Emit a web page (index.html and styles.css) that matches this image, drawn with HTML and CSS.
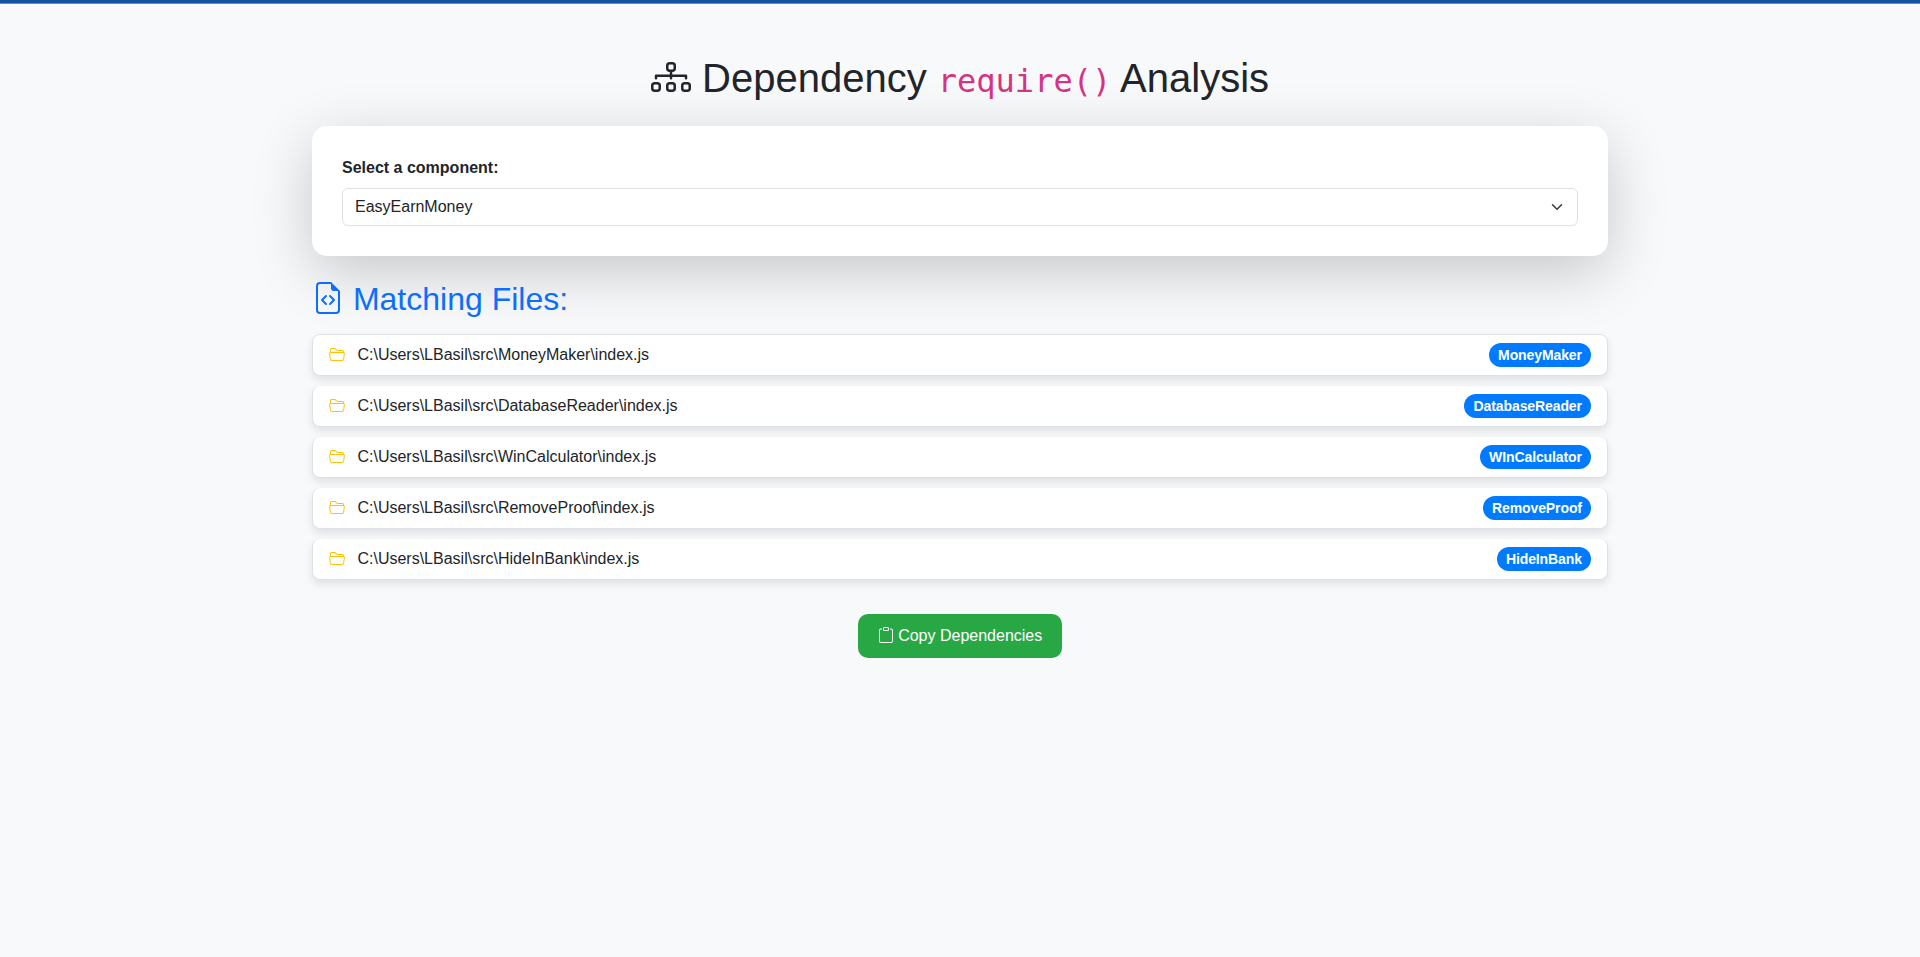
FILE: index.html
```html
<!DOCTYPE html>
<html lang="en">
<head>
<meta charset="utf-8">
<title>Dependency Analysis</title>
<link rel="stylesheet" href="styles.css">
</head>
<body>
<svg class="sprite" aria-hidden="true">
  <symbol id="folder" viewBox="0 0 16 16"><path d="M1 3.5A1.5 1.5 0 0 1 2.5 2h2.764c.958 0 1.76.56 2.311 1.184C7.985 3.648 8.48 4 9 4h4.5A1.5 1.5 0 0 1 15 5.5v.64c.57.265.94.876.856 1.546l-.64 5.124A2.5 2.5 0 0 1 12.733 15H3.266a2.5 2.5 0 0 1-2.481-2.19l-.64-5.124A1.5 1.5 0 0 1 1 6.14zM2 6h12v-.5a.5.5 0 0 0-.5-.5H9c-.964 0-1.71-.629-2.174-1.154C6.374 3.334 5.82 3 5.264 3H2.5a.5.5 0 0 0-.5.5zm-.367 1a.5.5 0 0 0-.496.562l.64 5.124A1.5 1.5 0 0 0 3.266 14h9.468a1.5 1.5 0 0 0 1.489-1.314l.64-5.124A.5.5 0 0 0 14.367 7z"/></symbol>
</svg>
<div class="topbar"></div>
<main class="container">
  <h1 class="title"><svg class="icon" viewBox="0 0 16 16"><path d="M6 3.5A1.5 1.5 0 0 1 7.5 2h1A1.5 1.5 0 0 1 10 3.5v1A1.5 1.5 0 0 1 8.5 6v1H14a.5.5 0 0 1 .5.5v1a.5.5 0 0 1-1 0V8h-5v.5a.5.5 0 0 1-1 0V8h-5v.5a.5.5 0 0 1-1 0v-1A.5.5 0 0 1 2 7h5.5V6A1.5 1.5 0 0 1 6 4.5zM8.5 5a.5.5 0 0 0 .5-.5v-1a.5.5 0 0 0-.5-.5h-1a.5.5 0 0 0-.5.5v1a.5.5 0 0 0 .5.5zM0 11.5A1.5 1.5 0 0 1 1.5 10h1A1.5 1.5 0 0 1 4 11.5v1A1.5 1.5 0 0 1 2.5 14h-1A1.5 1.5 0 0 1 0 12.5zm1.5-.5a.5.5 0 0 0-.5.5v1a.5.5 0 0 0 .5.5h1a.5.5 0 0 0 .5-.5v-1a.5.5 0 0 0-.5-.5zm4.5.5A1.5 1.5 0 0 1 7.5 10h1a1.5 1.5 0 0 1 1.5 1.5v1A1.5 1.5 0 0 1 8.5 14h-1A1.5 1.5 0 0 1 6 12.5zm1.5-.5a.5.5 0 0 0-.5.5v1a.5.5 0 0 0 .5.5h1a.5.5 0 0 0 .5-.5v-1a.5.5 0 0 0-.5-.5zm4.5.5a1.5 1.5 0 0 1 1.5-1.5h1a1.5 1.5 0 0 1 1.5 1.5v1a1.5 1.5 0 0 1-1.5 1.5h-1a1.5 1.5 0 0 1-1.5-1.5zm1.5-.5a.5.5 0 0 0-.5.5v1a.5.5 0 0 0 .5.5h1a.5.5 0 0 0 .5-.5v-1a.5.5 0 0 0-.5-.5z"/></svg> Dependency <code>require()</code> Analysis</h1>

  <section class="card">
    <label class="label" for="component">Select a component:</label>
    <div class="select-wrap">
      <select class="select" id="component"><option>EasyEarnMoney</option></select>
      <svg class="chevron" viewBox="0 0 16 16"><path fill="none" stroke="#343a40" stroke-linecap="round" stroke-linejoin="round" stroke-width="2" d="m2 5 6 6 6-6"/></svg>
    </div>
  </section>

  <h2 class="subtitle"><svg class="icon" viewBox="0 0 16 16"><path d="M14 4.5V14a2 2 0 0 1-2 2H4a2 2 0 0 1-2-2V2a2 2 0 0 1 2-2h5.5zm-3 0A1.5 1.5 0 0 1 9.5 3V1H4a1 1 0 0 0-1 1v12a1 1 0 0 0 1 1h8a1 1 0 0 0 1-1V4.5z"/><path d="M8.646 6.646a.5.5 0 0 1 .708 0l2 2a.5.5 0 0 1 0 .708l-2 2a.5.5 0 0 1-.708-.708L10.293 9 8.646 7.354a.5.5 0 0 1 0-.708m-1.292 0a.5.5 0 0 0-.708 0l-2 2a.5.5 0 0 0 0 .708l2 2a.5.5 0 0 0 .708-.708L5.707 9l1.647-1.646a.5.5 0 0 0 0-.708"/></svg> Matching Files:</h2>

  <ul class="files">
    <li class="file"><span><svg class="icon folder"><use href="#folder"/></svg> C:\Users\LBasil\src\MoneyMaker\index.js</span><span class="badge">MoneyMaker</span></li>
    <li class="file"><span><svg class="icon folder"><use href="#folder"/></svg> C:\Users\LBasil\src\DatabaseReader\index.js</span><span class="badge">DatabaseReader</span></li>
    <li class="file"><span><svg class="icon folder"><use href="#folder"/></svg> C:\Users\LBasil\src\WinCalculator\index.js</span><span class="badge">WInCalculator</span></li>
    <li class="file"><span><svg class="icon folder"><use href="#folder"/></svg> C:\Users\LBasil\src\RemoveProof\index.js</span><span class="badge">RemoveProof</span></li>
    <li class="file"><span><svg class="icon folder"><use href="#folder"/></svg> C:\Users\LBasil\src\HideInBank\index.js</span><span class="badge">HideInBank</span></li>
  </ul>

  <div class="actions">
    <button class="copy" type="button"><svg class="icon" viewBox="0 0 16 16"><path d="M4 1.5H3a2 2 0 0 0-2 2V14a2 2 0 0 0 2 2h10a2 2 0 0 0 2-2V3.5a2 2 0 0 0-2-2h-1v1h1a1 1 0 0 1 1 1V14a1 1 0 0 1-1 1H3a1 1 0 0 1-1-1V3.5a1 1 0 0 1 1-1h1z"/><path d="M9.5 1a.5.5 0 0 1 .5.5v1a.5.5 0 0 1-.5.5h-3a.5.5 0 0 1-.5-.5v-1a.5.5 0 0 1 .5-.5zm-3-1A1.5 1.5 0 0 0 5 1.5v1A1.5 1.5 0 0 0 6.5 4h3A1.5 1.5 0 0 0 11 2.5v-1A1.5 1.5 0 0 0 9.5 0z"/></svg> Copy Dependencies</button>
  </div>
</main>
</body>
</html>
```
FILE: styles.css
```css
*, *::before, *::after { box-sizing: border-box; }
body {
  margin: 0;
  min-height: 100vh;
  background: #f8f9fb;
  color: #212529;
  font: 400 16px/1.5 "Liberation Sans", Arial, sans-serif;
}
.sprite { display: none; }
.topbar {
  height: 4px;
  background: #14539f;
  border-bottom: 1px solid #5f8dc0;
}
.container {
  max-width: 1320px;
  margin: 0 auto;
  padding: 50px 12px 0;
}
.icon {
  display: inline-block;
  width: 1em;
  height: 1em;
  vertical-align: -.125em;
  fill: currentColor;
}
.title {
  margin: 0 0 24px;
  font-size: 40px;
  font-weight: 400;
  line-height: 48px;
  text-align: center;
}
.title code {
  color: #d63384;
  font-family: "DejaVu Sans Mono", monospace;
  font-size: 32px;
  line-height: 1;
}
.card {
  padding: 30px;
  background: #fff;
  border-radius: 15px;
  box-shadow: 0 16px 60px rgba(0, 0, 0, .2);
}
.label {
  display: block;
  margin-bottom: 8px;
  font-weight: 700;
}
.select-wrap { position: relative; }
.select {
  display: block;
  width: 100%;
  height: 38px;
  padding: 6px 36px 6px 12px;
  appearance: none;
  border: 1px solid #dee2e6;
  border-radius: 6px;
  background: #fff;
  color: #212529;
  font: inherit;
}
.chevron {
  position: absolute;
  top: 13px;
  right: 15px;
  width: 12px;
  height: 12px;
  pointer-events: none;
}
.subtitle {
  margin: 24px 0 15.6px;
  color: #0d6efd;
  font-size: 32px;
  font-weight: 400;
  line-height: 1.2;
}
.files {
  margin: 0;
  padding: 0;
  list-style: none;
}
.file {
  display: flex;
  justify-content: space-between;
  align-items: center;
  margin-bottom: 10px;
  padding: 8px 16px;
  background: #fff;
  border: 1px solid #dee2e6;
  border-radius: 8px;
  box-shadow: 0 4px 8px rgba(0, 0, 0, .1);
}
.file + .file { border-top-width: 0; }
.folder {
  margin-right: 8px;
  color: #ffc107;
}
.badge {
  padding: 4.9px 9.1px;
  border-radius: 800px;
  background: #007bff;
  color: #fff;
  font-size: 14px;
  font-weight: 700;
  letter-spacing: -.1px;
  line-height: 1;
}
.actions {
  margin-top: 34px;
  text-align: center;
}
.copy {
  padding: 10px 20px;
  border: 0;
  border-radius: 10px;
  background: #28a745;
  color: #fff;
  font: inherit;
}
```
